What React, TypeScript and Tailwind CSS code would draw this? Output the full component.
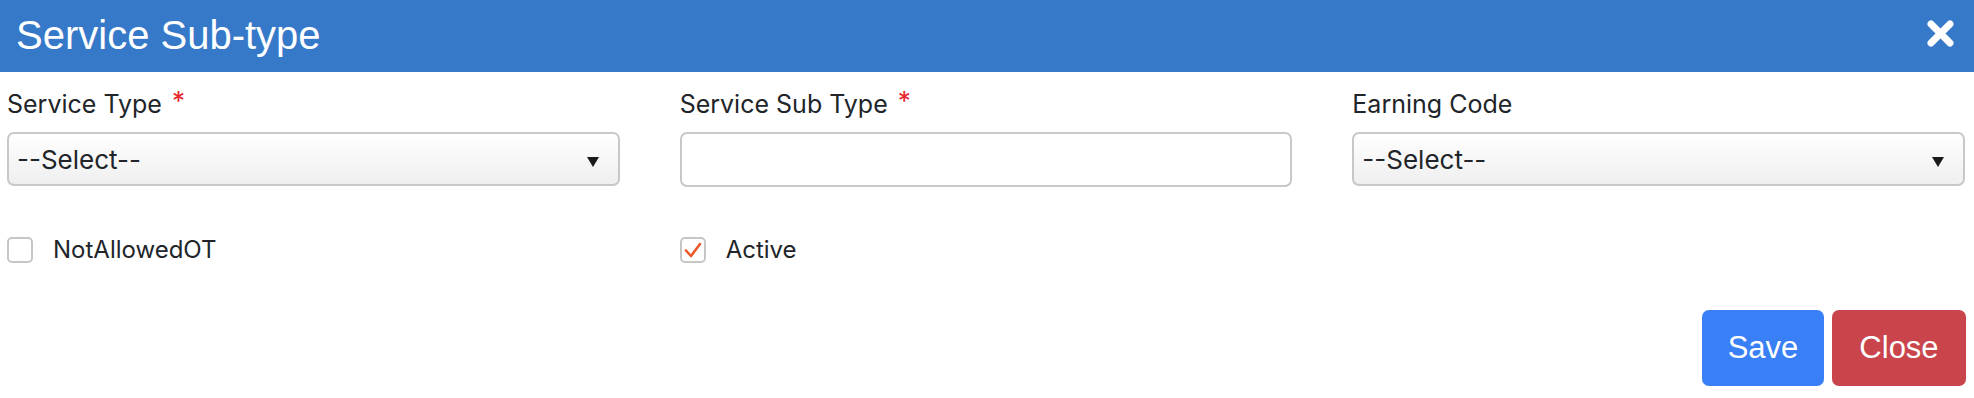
import React from "react";

const labelFont = { fontFamily: "Inter, 'Noto Sans', sans-serif" };

function Label({ text, required }: { text: string; required?: boolean }) {
  return (
    <div className="flex items-start h-[37px] text-[25px] leading-[37px] text-[#212529]" style={labelFont}>
      <span>{text}</span>
      {required && <span className="ml-[10px] text-[#e8262b] leading-[30px] text-[26px]">*</span>}
    </div>
  );
}

function Select() {
  return (
    <div className="relative mt-[9px] h-[54px] rounded-[7px] border-2 border-[#c8c8c8] bg-gradient-to-b from-white to-[#efefef] flex items-center pl-[8px]">
      <span className="text-[26px] text-[#212529]" style={labelFont}>--Select--</span>
      <svg className="absolute right-[19px] top-[23px]" width="12" height="10" viewBox="0 0 12 10">
        <polygon points="0,0 12,0 6,10" fill="#1a1a1a" />
      </svg>
    </div>
  );
}

function Check({ checked, text }: { checked?: boolean; text: string }) {
  return (
    <div className="flex items-center h-[27px]">
      <div className="w-[26px] h-[26px] rounded-[5px] border-2 border-[#c6c6c6] bg-white flex items-center justify-center">
        {checked && (
          <svg width="20" height="18" viewBox="0 0 20 18">
            <path d="M3 9.5 L8 15 L17 3" fill="none" stroke="#ea5a2a" strokeWidth="2.6" strokeLinecap="round" strokeLinejoin="round" />
          </svg>
        )}
      </div>
      <span className="ml-[20px] text-[24px] text-[#212529]" style={labelFont}>{text}</span>
    </div>
  );
}

export default function App() {
  return (
    <div className="w-[1974px] h-[398px] bg-white overflow-hidden">
      <div className="h-[72px] bg-[#3679c9] flex items-center justify-between pl-[16px] pr-[20px]">
        <h1 className="text-white text-[40px] leading-none -mt-[3px]" style={{ fontFamily: "'Liberation Sans', Arial, sans-serif" }}>
          Service Sub-type
        </h1>
        <svg width="27" height="27" viewBox="0 0 27 27" className="mt-[-6px]">
          <path d="M4 4 L23 23 M23 4 L4 23" stroke="white" strokeWidth="7" strokeLinecap="round" />
        </svg>
      </div>

      <div className="grid grid-cols-3 gap-x-[60px] pl-[7px] pr-[9px] mt-[14px]">
        <div>
          <Label text="Service Type" required />
          <Select />
        </div>
        <div>
          <Label text="Service Sub Type" required />
          <div className="mt-[9px] h-[55px] rounded-[7px] border-2 border-[#c8c8c8] bg-white" />
        </div>
        <div>
          <Label text="Earning Code" />
          <Select />
        </div>
      </div>

      <div className="grid grid-cols-3 gap-x-[60px] pl-[7px] pr-[9px] mt-[49px]">
        <Check text="NotAllowedOT" />
        <Check text="Active" checked />
        <div />
      </div>

      <div className="flex justify-end gap-[8px] pr-[8px] mt-[47px]">
        <button className="w-[122px] h-[76px] rounded-[7px] bg-[#397ff5] text-white text-[31px]" style={{ fontFamily: "'Liberation Sans', Arial, sans-serif" }}>
          Save
        </button>
        <button className="w-[134px] h-[76px] rounded-[7px] bg-[#c9444b] text-white text-[31px]" style={{ fontFamily: "'Liberation Sans', Arial, sans-serif" }}>
          Close
        </button>
      </div>
    </div>
  );
}
